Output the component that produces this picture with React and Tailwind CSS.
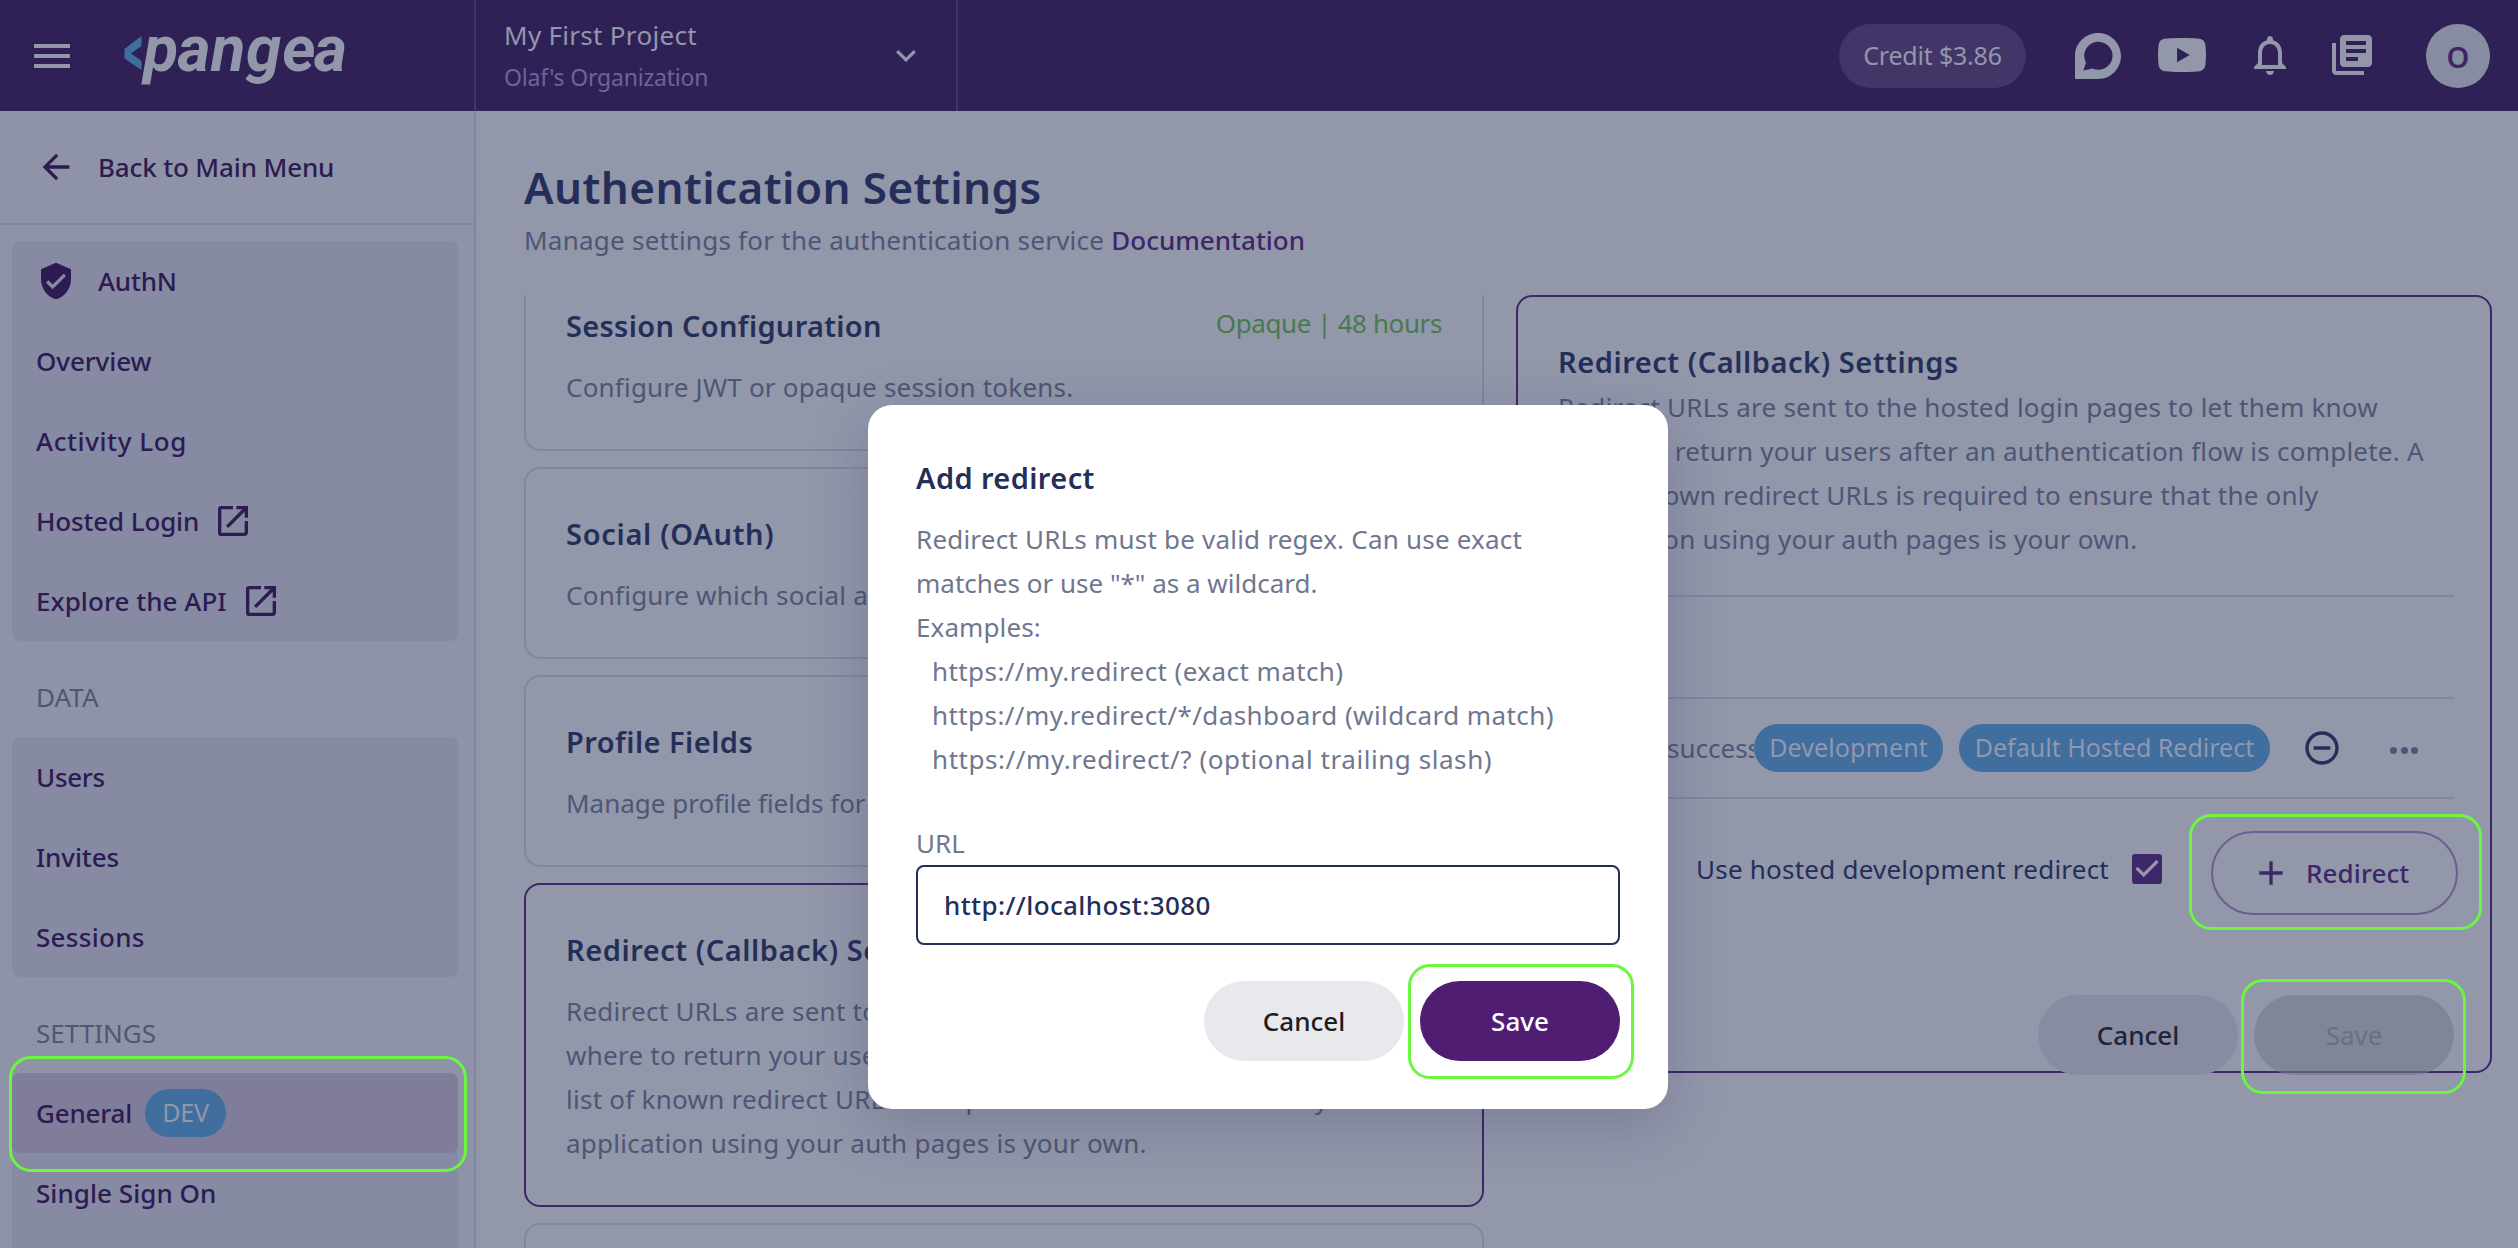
import {
  MdArrowBack,
  MdCheckBox,
  MdLibraryBooks,
  MdNotificationsNone,
  MdOpenInNew,
  MdRemoveCircleOutline,
  MdVerifiedUser,
  MdAdd,
} from "react-icons/md";

const DESCRIPTION = [
  "Redirect URLs are sent to the hosted login pages to let them know",
  "where to return your users after an authentication flow is complete. A",
  "list of known redirect URLs is required to ensure that the only",
  "application using your auth pages is your own.",
];

function Highlight({ className }) {
  return (
    <span
      className={`pointer-events-none absolute z-20 rounded-[22px] border-[3px] border-[#6cf73f] ${className}`}
    />
  );
}

function Logo() {
  return (
    <svg width="240" height="60" viewBox="0 0 240 60" role="img" aria-label="pangea" className="overflow-visible">
      <path d="M17.500 4 0.500 17v9.500L17.500 38V29L7 21.500 17.500 14Z" fill="#3f6e9f" />
      <text
        transform="scale(0.98 1)"
        x="20 54.500 88.500 124.500 161.500 194"
        y="39"
        fill="#9297aa"
        className="font-['Roboto',sans-serif] text-[65px] font-bold italic"
      >
        pangea
      </text>
    </svg>
  );
}

function Header() {
  return (
    <header className="flex h-[111px] shrink-0 bg-[#2f2156] text-[#9297aa]">
      <div className="flex w-[476px] shrink-0 items-center border-r-2 border-[#43356a] pl-[34px]">
        <div className="flex w-9 flex-col gap-1.5">
          <span className="h-1 bg-[#9297aa]" />
          <span className="h-1 bg-[#9297aa]" />
          <span className="h-1 bg-[#9297aa]" />
        </div>
        <div className="ml-[54px] mt-[13px]">
          <Logo />
        </div>
      </div>
      <div className="flex w-[482px] shrink-0 justify-between border-r-2 border-[#43356a] pl-7 pr-[40px]">
        <div className="flex flex-col pt-[13px]">
          <span className="leading-[44px] tracking-[0.3px]">My First Project</span>
          <span className="mt-0.5 text-[23px] leading-9 tracking-[-0.2px] text-[#6c6595]">Olaf's Organization</span>
        </div>
        <svg className="mt-[50px]" width="20" height="12" viewBox="0 0 20 12" fill="none" stroke="#9297aa" strokeWidth="3.200">
          <path d="m1.200 1.200 8.800 8.600 8.800-8.600" />
        </svg>
      </div>
      <div className="flex flex-1 items-center justify-end pr-7">
        <div className="flex h-16 w-[187px] items-center justify-center rounded-full bg-[#443569] text-[25px] tracking-[-0.2px]">
          Credit $3.86
        </div>
        <svg className="ml-[49px]" width="46" height="46" viewBox="0 0 24 24" fill="#9297aa">
          <path d="M12.103 0C18.666 0 24 5.485 24 11.997c0 6.510-5.330 11.990-11.900 11.990L0 24V11.790C0 5.280 5.532 0 12.103 0zm.116 4.563c-2.593-.003-4.996 1.352-6.337 3.570-1.330 2.208-1.387 4.957-.148 7.220L4.400 19.610l4.794-1.074c2.745 1.225 5.965.676 8.136-1.390 2.170-2.054 2.860-5.228 1.737-7.997-1.135-2.778-3.840-4.590-6.840-4.585z" />
        </svg>
        <svg className="ml-[37px] mt-[-2px]" width="48" height="48" viewBox="0 0 24 24" fill="#9297aa">
          <path d="M23.498 6.186a3.016 3.016 0 0 0-2.122-2.136C19.505 3.545 12 3.545 12 3.545s-7.505 0-9.377.505A3.017 3.017 0 0 0 .502 6.186C0 8.070 0 12 0 12s0 3.930.502 5.814a3.016 3.016 0 0 0 2.122 2.136c1.871.505 9.376.505 9.376.505s7.505 0 9.377-.505a3.015 3.015 0 0 0 2.122-2.136C24 15.930 24 12 24 12s0-3.930-.502-5.814zM9.545 15.568V8.432L15.818 12z" />
        </svg>
        <MdNotificationsNone size={48} className="ml-10 mt-[-1px]" />
        <MdLibraryBooks size={48} className="ml-[34px] mt-[-1px]" />
        <div className="ml-[50px] flex size-16 items-center justify-center rounded-full bg-[#868ca1] pt-0.5 text-[29px] font-semibold text-[#3e2768]">
          O
        </div>
      </div>
    </header>
  );
}

function NavItem({ label, className = "", external, children }) {
  return (
    <div className={`flex h-20 items-center pl-6 ${className}`}>
      <span>{label}</span>
      {external && <MdOpenInNew size={40} className="ml-3.5" />}
      {children}
    </div>
  );
}

function NavHeading({ children }) {
  return <div className="h-24 pl-9 pt-4 leading-[80px] text-[#4e5775]">{children}</div>;
}

function Sidebar() {
  return (
    <aside className="flex w-[476px] shrink-0 flex-col border-r-2 border-[#83879c] bg-[#8f93a7] font-medium text-[#2d1b52]">
      <div className="flex h-[114px] shrink-0 items-center border-b-2 border-[#83879c] pl-9">
        <MdArrowBack size={40} />
        <span className="ml-[22px] tracking-[-0.15px]">Back to Main Menu</span>
      </div>
      <nav className="flex flex-col pl-3 pr-4 pt-4">
        <div className="rounded-lg bg-[#868aa3]">
          <div className="flex h-20 items-center pl-6">
            <MdVerifiedUser size={40} />
            <span className="ml-[22px] tracking-[-0.2px]">AuthN</span>
          </div>
          <NavItem label="Overview" className="tracking-[-0.1px]" />
          <NavItem label="Activity Log" className="tracking-[0.6px]" />
          <NavItem label="Hosted Login" external className="tracking-[-0.15px]" />
          <NavItem label="Explore the API" external className="tracking-[0.05px]" />
        </div>
        <div className="-ml-3 font-normal">
          <NavHeading>DATA</NavHeading>
        </div>
        <div className="rounded-lg bg-[#868aa3]">
          <NavItem label="Users" className="tracking-[-0.3px]" />
          <NavItem label="Invites" className="tracking-[-0.1px]" />
          <NavItem label="Sessions" className="tracking-[0.3px]" />
        </div>
        <div className="-ml-3 font-normal">
          <NavHeading>SETTINGS</NavHeading>
        </div>
        <div className="relative h-60 rounded-lg bg-[#868aa3]">
          <NavItem label="General" className="rounded-lg bg-[#807d9b] tracking-[-0.2px]">
            <span className="ml-[13px] flex h-12 w-[81px] items-center justify-center rounded-full bg-[#3f6e9f] text-[25px] font-normal text-[#9297aa]">
              DEV
            </span>
          </NavItem>
          <NavItem label="Single Sign On" className="tracking-[0.05px]" />
          <Highlight className="-left-[3px] -top-[17px] h-[116px] w-[458px]" />
        </div>
      </nav>
    </aside>
  );
}

function SettingCard({ title, lines, status, active, titleClass, lineClass }) {
  return (
    <section
      className={`shrink-0 rounded-2xl border-2 px-10 pb-[40px] pt-10 ${active ? "border-[#3e2768]" : "border-[#83879c]"}`}
    >
      <div className="flex items-start justify-between">
        <h2 className={`mt-[3px] text-[29px] font-semibold leading-[44px] text-[#242f59] ${titleClass}`}>{title}</h2>
        {status && <span className="leading-[44px] tracking-[-0.4px] text-[#477a4c]">{status}</span>}
      </div>
      <div className={`mt-[17px] whitespace-nowrap leading-[44px] text-[#4e5675] ${lineClass}`}>
        {lines.map((l) => (
          <p key={l}>{l}</p>
        ))}
      </div>
    </section>
  );
}

function Tag({ children, className }) {
  return (
    <span
      className={`flex h-12 shrink-0 items-center justify-center whitespace-nowrap rounded-full bg-[#3f6e9f] text-[25px] text-[#9297aa] ${className}`}
    >
      {children}
    </span>
  );
}

function RedirectPanel() {
  return (
    <section className="h-[778px] w-[976px] shrink-0 rounded-2xl border-2 border-[#3e2768] pl-10 pr-9 pt-[43px]">
      <h2 className="text-[29px] font-semibold leading-[44px] tracking-[0.55px] text-[#242f59]">
        Redirect (Callback) Settings
      </h2>
      <div className="mt-px whitespace-nowrap leading-[44px] tracking-[0.23px] text-[#4e5675]">
        {DESCRIPTION.map((l) => (
          <p key={l}>{l}</p>
        ))}
      </div>
      <div className="mt-[34px] h-[104px] border-y-2 border-[#83879c]" />
      <div className="flex h-[100px] items-center border-b-2 border-[#83879c]">
        <div className="w-[196px] shrink-0 overflow-hidden whitespace-nowrap pl-[109px] text-[#4e5675]">success</div>
        <Tag className="w-[189px] tracking-[0.1px]">Development</Tag>
        <Tag className="ml-4 w-[311px]">Default Hosted Redirect</Tag>
        <MdRemoveCircleOutline size={40} className="ml-8 shrink-0 text-[#242f59]" />
        <div className="ml-[48px] mt-1 flex gap-[3.500px]">
          <span className="size-[7px] rounded-full bg-[#4e5675]" />
          <span className="size-[7px] rounded-full bg-[#4e5675]" />
          <span className="size-[7px] rounded-full bg-[#4e5675]" />
        </div>
      </div>
      <div className="-mr-1 flex justify-end pt-8">
        <span className="mt-[-4px] leading-[84px] tracking-[0.23px] text-[#242f59]">Use hosted development redirect</span>
        <MdCheckBox size={40} className="ml-[18px] mt-[18px] text-[#3e2768]" />
        <button className="relative ml-11 flex h-[84px] w-[247px] items-center rounded-full border-2 border-[#6a6090] pl-[38px] font-medium text-[#3e2768]">
          <MdAdd size={40} />
          <span className="ml-[15px] tracking-[0.1px]">Redirect</span>
          <Highlight className="-left-6 -top-[19px] h-[116px] w-[293px]" />
        </button>
      </div>
      <div className="flex justify-end gap-4 pt-20">
        <button className="h-20 w-[200px] rounded-full bg-[#878ca2] font-medium text-[#1f2438]">Cancel</button>
        <button className="relative h-20 w-[200px] rounded-full bg-[#777a8c]/60 text-[#6a6f85]">
          Save
          <Highlight className="-left-[13px] -top-4 h-[115px] w-[225px]" />
        </button>
      </div>
    </section>
  );
}

function AddRedirectModal() {
  return (
    <div
      role="dialog"
      className="absolute left-[868px] top-[405px] z-10 flex h-[704px] w-[800px] flex-col rounded-[24px] bg-white px-12 pt-[51px] shadow-[0_16px_60px_rgba(40,40,80,0.22)]"
    >
      <h2 className="text-[29px] font-semibold leading-[44px] tracking-[0.4px] text-[#242f59]">Add redirect</h2>
      <div className="mt-[17px] whitespace-nowrap leading-[44px] text-[#6f7790]">
        <p className="tracking-[0.21px]">Redirect URLs must be valid regex. Can use exact</p>
        <p>matches or use "*" as a wildcard.</p>
        <p className="tracking-[0.1px]">Examples:</p>
        <div className="pl-4 tracking-[0.42px]">
          <p>https://my.redirect (exact match)</p>
          <p>https://my.redirect/*/dashboard (wildcard match)</p>
          <p className="tracking-[0.56px]">https://my.redirect/? (optional trailing slash)</p>
        </div>
      </div>
      <label className="mt-10 leading-[44px] text-[#6f7790]">URL</label>
      <div className="h-20 rounded-lg border-2 border-[#242f59] pl-[26px] leading-[76px] tracking-[0.4px] font-medium text-[#242f59]">
        http://localhost:3080
      </div>
      <div className="mt-9 flex justify-end gap-4">
        <button className="h-20 w-[200px] rounded-full bg-[#e8e9ed] font-medium text-[#1e1e1e]">Cancel</button>
        <button className="relative h-20 w-[200px] rounded-full bg-[#4f1e73] font-medium text-white">
          Save
          <Highlight className="-left-3 -top-[17px] h-[115px] w-[226px]" />
        </button>
      </div>
    </div>
  );
}

export default function App() {
  return (
    <div className="relative flex h-[1248px] w-[2518px] flex-col overflow-hidden bg-[#9297aa] font-['Noto_Sans',sans-serif] text-[26px]">
      <Header />
      <div className="flex min-h-0 flex-1">
        <Sidebar />
        <main className="flex flex-1 flex-col pl-12 pt-[46px]">
          <h1 className="text-[44px] font-semibold leading-[60px] tracking-[0.42px] text-[#242f59]">
            Authentication Settings
          </h1>
          <p className="mt-px leading-[44px] tracking-[0.25px] text-[#4e5675]">
            Manage settings for the authentication service{" "}
            <span className="font-medium tracking-normal text-[#3e2768]">Documentation</span>
          </p>
          <div className="mt-[33px] flex min-h-0 flex-1 gap-8">
            <div className="flex w-[960px] shrink-0 flex-col overflow-hidden">
              <div className="-mt-9 flex flex-col gap-4">
                <SettingCard
                  title="Session Configuration"
                  titleClass="tracking-[0.3px]"
                  status="Opaque | 48 hours"
                  lines={["Configure JWT or opaque session tokens."]}
                  lineClass="tracking-[0.2px]"
                />
                <SettingCard
                  title="Social (OAuth)"
                  titleClass="tracking-[0.7px]"
                  lines={["Configure which social authentication"]}
                  lineClass="tracking-[0.25px]"
                />
                <SettingCard
                  title="Profile Fields"
                  titleClass="tracking-[0.45px]"
                  lines={["Manage profile fields for your users"]}
                  lineClass="tracking-normal"
                />
                <SettingCard
                  title="Redirect (Callback) Settings"
                  titleClass="tracking-[0.55px]"
                  lines={DESCRIPTION}
                  lineClass="tracking-[0.26px]"
                  active
                />
                <SettingCard title="" lines={[]} />
              </div>
            </div>
            <RedirectPanel />
          </div>
        </main>
      </div>
      <AddRedirectModal />
    </div>
  );
}
